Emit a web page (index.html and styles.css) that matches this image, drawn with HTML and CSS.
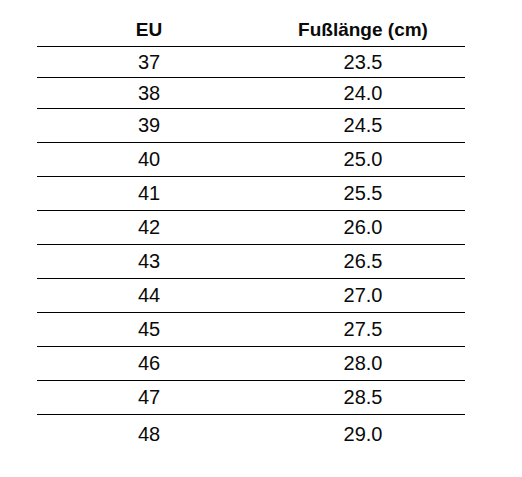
FILE: index.html
```html
<!DOCTYPE html>
<html lang="de">
<head>
<meta charset="utf-8">
<title>Größentabelle</title>
<link rel="stylesheet" href="styles.css">
</head>
<body>
<div class="size-table">
  <div class="row head"><div class="cell c1">EU</div><div class="cell c2">Fußlänge (cm)</div></div>
  <div class="row tight"><div class="cell c1">37</div><div class="cell c2">23.5</div></div>
  <div class="row tight"><div class="cell c1">38</div><div class="cell c2">24.0</div></div>
  <div class="row"><div class="cell c1">39</div><div class="cell c2">24.5</div></div>
  <div class="row"><div class="cell c1">40</div><div class="cell c2">25.0</div></div>
  <div class="row"><div class="cell c1">41</div><div class="cell c2">25.5</div></div>
  <div class="row"><div class="cell c1">42</div><div class="cell c2">26.0</div></div>
  <div class="row"><div class="cell c1">43</div><div class="cell c2">26.5</div></div>
  <div class="row"><div class="cell c1">44</div><div class="cell c2">27.0</div></div>
  <div class="row"><div class="cell c1">45</div><div class="cell c2">27.5</div></div>
  <div class="row"><div class="cell c1">46</div><div class="cell c2">28.0</div></div>
  <div class="row"><div class="cell c1">47</div><div class="cell c2">28.5</div></div>
  <div class="row last"><div class="cell c1">48</div><div class="cell c2">29.0</div></div>
</div>
</body>
</html>
```
FILE: styles.css
```css
html, body {
  margin: 0;
  padding: 0;
  background: #fff;
}
body {
  padding: 14px 0 0 37px;
  font-family: "Liberation Sans", Arial, sans-serif;
  color: #0a0a0a;
}
.size-table {
  width: 428px;
}
.row {
  display: grid;
  grid-template-columns: 224px 204px;
  height: 34px;
  box-sizing: border-box;
  border-bottom: 1px solid #000;
  font-size: 20px;
}
.row.head {
  height: 33px;
  font-size: 19px;
  font-weight: bold;
}
.row.tight {
  height: 31px;
}
.row.last {
  border-bottom: none;
  height: 38px;
}
.cell {
  display: flex;
  align-items: center;
  justify-content: center;
}
```
